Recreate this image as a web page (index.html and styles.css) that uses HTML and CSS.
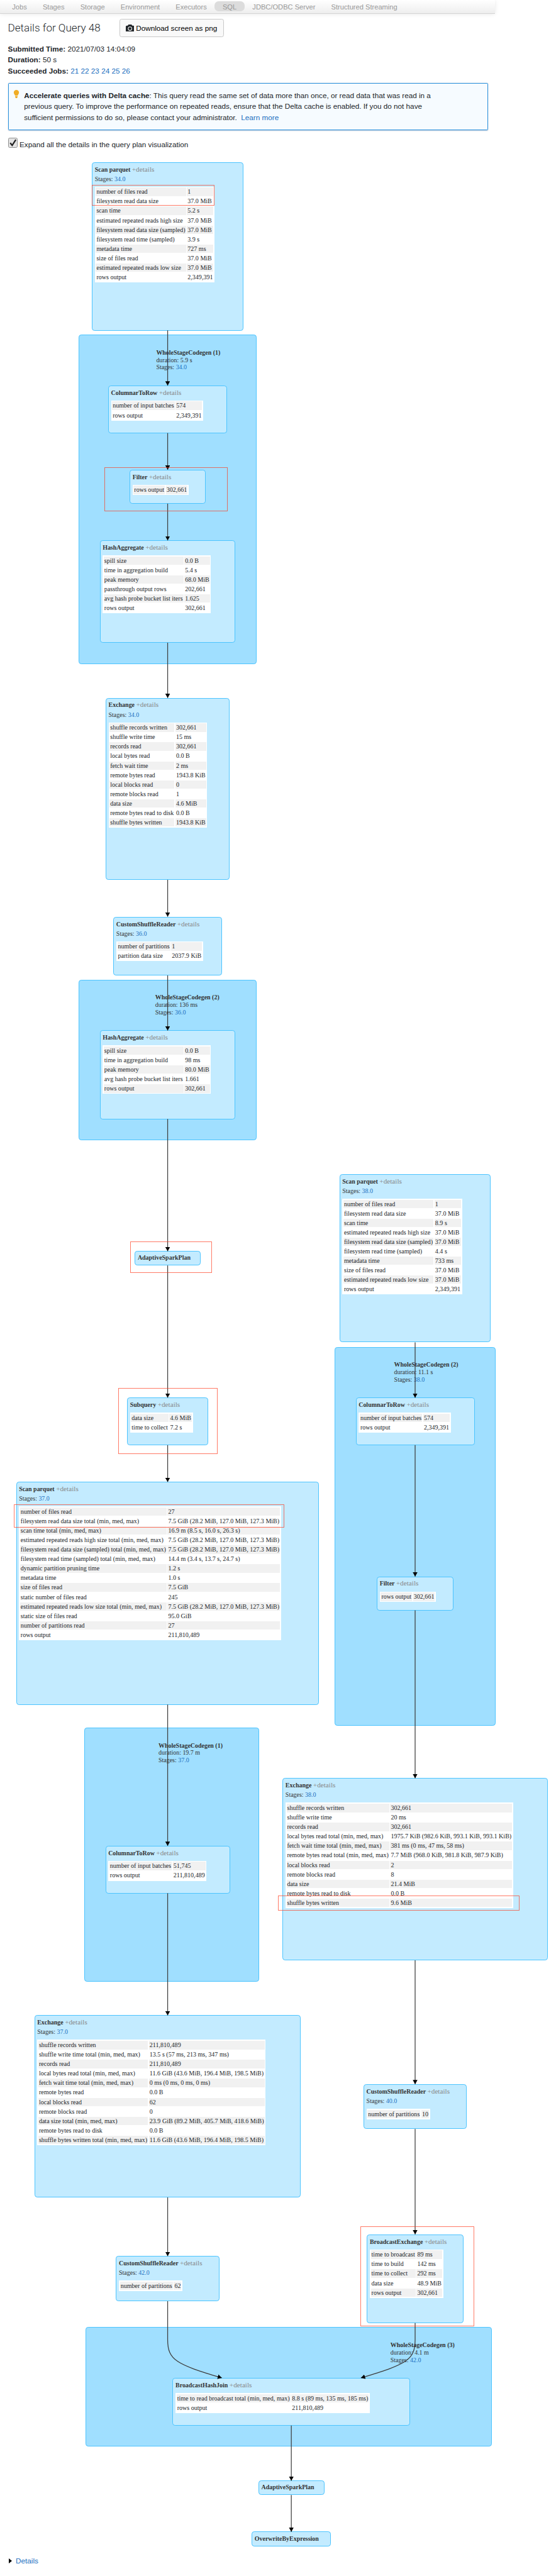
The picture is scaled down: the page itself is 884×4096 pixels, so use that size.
FILE: index.html
```html
<!DOCTYPE html>
<html lang="en">
<head>
<meta charset="utf-8">
<title>Details for Query 48</title>
<link rel="stylesheet" href="styles.css">
</head>
<body>
<div class="page">
  <nav class="tabs">
    <a>Jobs</a><a>Stages</a><a>Storage</a><a>Environment</a><a>Executors</a><a class="active">SQL</a><a>JDBC/ODBC Server</a><a>Structured Streaming</a>
  </nav>
  <header class="summary">
    <div class="heading">
      <h1>Details for Query 48</h1>
      <button class="download"><svg class="camera" viewBox="0 0 16 14"><path fill-rule="evenodd" d="M5 0h6l1.200 2H14a2 2 0 0 1 2 2v8a2 2 0 0 1-2 2H2a2 2 0 0 1-2-2V4a2 2 0 0 1 2-2h1.800zM8 3.800a4 4 0 1 0 0 8a4 4 0 0 0 0-8zm0 1.200a2.800 2.800 0 1 1 0 5.600a2.800 2.800 0 0 1 0-5.600z"/></svg>Download screen as png</button>
    </div>
    <ul class="facts">
      <li><b>Submitted Time:</b> 2021/07/03 14:04:09</li>
      <li><b>Duration:</b> 50 s</li>
      <li><b>Succeeded Jobs:</b> <a>21</a> <a>22</a> <a>23</a> <a>24</a> <a>25</a> <a>26</a></li>
    </ul>
    <div class="notice">
      <svg class="bulb" viewBox="0 0 11 16"><path d="M5.500 0a5 5 0 0 1 5 5c0 2.500-2 3.500-2.600 6H3.100C2.500 8.500.5 7.500.5 5a5 5 0 0 1 5-5zM3.200 12h4.600v1.500L6.500 16h-2l-1.300-2.500z"/></svg>
      <p><b>Accelerate queries with Delta cache</b>: This query read the same set of data more than once, or read data that was read in a<br>previous query. To improve the performance on repeated reads, ensure that the Delta cache is enabled. If you do not have<br>sufficient permissions to do so, please contact your administrator. &nbsp;<a>Learn more</a></p>
    </div>
    <label class="expand"><span class="check"><svg viewBox="0 0 12 12"><path d="M2 6.500l2.800 3.500L10 2"/></svg></span>Expand all the details in the query plan visualization</label>
  </header>

  <main class="plan">
    <div class="cluster" id="c1"></div>
    <div class="cluster" id="c2"></div>
    <div class="cluster" id="c3"></div>
    <div class="cluster" id="c4"></div>
    <div class="cluster" id="c5"></div>
    <div class="label" id="l1"><b>WholeStageCodegen (1)</b><br>duration: 5.9 s<br>Stages: <a>34.0</a></div>
    <div class="label" id="l2"><b>WholeStageCodegen (2)</b><br>duration: 136 ms<br>Stages: <a>36.0</a></div>
    <div class="label" id="l3"><b>WholeStageCodegen (2)</b><br>duration: 11.1 s<br>Stages: <a>38.0</a></div>
    <div class="label" id="l4"><b>WholeStageCodegen (1)</b><br>duration: 19.7 m<br>Stages: <a>37.0</a></div>
    <div class="label" id="l5"><b>WholeStageCodegen (3)</b><br>duration: 4.1 m<br>Stages: <a>42.0</a></div>

    <section class="node" id="scan1">
      <h2>Scan parquet <span>+details</span></h2><p>Stages: <a>34.0</a></p>
      <table>
        <tr><td>number of files read</td><td>1</td></tr>
        <tr><td>filesystem read data size</td><td>37.0 MiB</td></tr>
        <tr><td>scan time</td><td>5.2 s</td></tr>
        <tr><td>estimated repeated reads high size</td><td>37.0 MiB</td></tr>
        <tr><td>filesystem read data size (sampled)</td><td>37.0 MiB</td></tr>
        <tr><td>filesystem read time (sampled)</td><td>3.9 s</td></tr>
        <tr><td>metadata time</td><td>727 ms</td></tr>
        <tr><td>size of files read</td><td>37.0 MiB</td></tr>
        <tr><td>estimated repeated reads low size</td><td>37.0 MiB</td></tr>
        <tr><td>rows output</td><td>2,349,391</td></tr>
      </table>
    </section>
    <section class="node" id="col1">
      <h2>ColumnarToRow <span>+details</span></h2>
      <table>
        <tr><td>number of input batches</td><td>574</td></tr>
        <tr><td>rows output</td><td>2,349,391</td></tr>
      </table>
    </section>
    <section class="node" id="filter1">
      <h2>Filter <span>+details</span></h2>
      <table>
        <tr><td>rows output</td><td>302,661</td></tr>
      </table>
    </section>
    <section class="node" id="hash1">
      <h2>HashAggregate <span>+details</span></h2>
      <table>
        <tr><td>spill size</td><td>0.0 B</td></tr>
        <tr><td>time in aggregation build</td><td>5.4 s</td></tr>
        <tr><td>peak memory</td><td>68.0 MiB</td></tr>
        <tr><td>passthrough output rows</td><td>202,661</td></tr>
        <tr><td>avg hash probe bucket list iters</td><td>1.625</td></tr>
        <tr><td>rows output</td><td>302,661</td></tr>
      </table>
    </section>
    <section class="node" id="ex1">
      <h2>Exchange <span>+details</span></h2><p>Stages: <a>34.0</a></p>
      <table>
        <tr><td>shuffle records written</td><td>302,661</td></tr>
        <tr><td>shuffle write time</td><td>15 ms</td></tr>
        <tr><td>records read</td><td>302,661</td></tr>
        <tr><td>local bytes read</td><td>0.0 B</td></tr>
        <tr><td>fetch wait time</td><td>2 ms</td></tr>
        <tr><td>remote bytes read</td><td>1943.8 KiB</td></tr>
        <tr><td>local blocks read</td><td>0</td></tr>
        <tr><td>remote blocks read</td><td>1</td></tr>
        <tr><td>data size</td><td>4.6 MiB</td></tr>
        <tr><td>remote bytes read to disk</td><td>0.0 B</td></tr>
        <tr><td>shuffle bytes written</td><td>1943.8 KiB</td></tr>
      </table>
    </section>
    <section class="node" id="reader1">
      <h2>CustomShuffleReader <span>+details</span></h2><p>Stages: <a>36.0</a></p>
      <table>
        <tr><td>number of partitions</td><td>1</td></tr>
        <tr><td>partition data size</td><td>2037.9 KiB</td></tr>
      </table>
    </section>
    <section class="node" id="hash2">
      <h2>HashAggregate <span>+details</span></h2>
      <table>
        <tr><td>spill size</td><td>0.0 B</td></tr>
        <tr><td>time in aggregation build</td><td>98 ms</td></tr>
        <tr><td>peak memory</td><td>80.0 MiB</td></tr>
        <tr><td>avg hash probe bucket list iters</td><td>1.661</td></tr>
        <tr><td>rows output</td><td>302,661</td></tr>
      </table>
    </section>
    <section class="node small" id="adaptive1"><h2>AdaptiveSparkPlan</h2></section>
    <section class="node" id="subquery">
      <h2>Subquery <span>+details</span></h2>
      <table>
        <tr><td>data size</td><td>4.6 MiB</td></tr>
        <tr><td>time to collect</td><td>7.2 s</td></tr>
      </table>
    </section>
    <section class="node" id="scan2">
      <h2>Scan parquet <span>+details</span></h2><p>Stages: <a>38.0</a></p>
      <table>
        <tr><td>number of files read</td><td>1</td></tr>
        <tr><td>filesystem read data size</td><td>37.0 MiB</td></tr>
        <tr><td>scan time</td><td>8.9 s</td></tr>
        <tr><td>estimated repeated reads high size</td><td>37.0 MiB</td></tr>
        <tr><td>filesystem read data size (sampled)</td><td>37.0 MiB</td></tr>
        <tr><td>filesystem read time (sampled)</td><td>4.4 s</td></tr>
        <tr><td>metadata time</td><td>733 ms</td></tr>
        <tr><td>size of files read</td><td>37.0 MiB</td></tr>
        <tr><td>estimated repeated reads low size</td><td>37.0 MiB</td></tr>
        <tr><td>rows output</td><td>2,349,391</td></tr>
      </table>
    </section>
    <section class="node" id="col2">
      <h2>ColumnarToRow <span>+details</span></h2>
      <table>
        <tr><td>number of input batches</td><td>574</td></tr>
        <tr><td>rows output</td><td>2,349,391</td></tr>
      </table>
    </section>
    <section class="node" id="filter2">
      <h2>Filter <span>+details</span></h2>
      <table>
        <tr><td>rows output</td><td>302,661</td></tr>
      </table>
    </section>
    <section class="node" id="scan3">
      <h2>Scan parquet <span>+details</span></h2><p>Stages: <a>37.0</a></p>
      <table>
        <tr><td>number of files read</td><td>27</td></tr>
        <tr><td>filesystem read data size total (min, med, max)</td><td>7.5 GiB (28.2 MiB, 127.0 MiB, 127.3 MiB)</td></tr>
        <tr><td>scan time total (min, med, max)</td><td>16.9 m (8.5 s, 16.0 s, 26.3 s)</td></tr>
        <tr><td>estimated repeated reads high size total (min, med, max)</td><td>7.5 GiB (28.2 MiB, 127.0 MiB, 127.3 MiB)</td></tr>
        <tr><td>filesystem read data size (sampled) total (min, med, max)</td><td>7.5 GiB (28.2 MiB, 127.0 MiB, 127.3 MiB)</td></tr>
        <tr><td>filesystem read time (sampled) total (min, med, max)</td><td>14.4 m (3.4 s, 13.7 s, 24.7 s)</td></tr>
        <tr><td>dynamic partition pruning time</td><td>1.2 s</td></tr>
        <tr><td>metadata time</td><td>1.0 s</td></tr>
        <tr><td>size of files read</td><td>7.5 GiB</td></tr>
        <tr><td>static number of files read</td><td>245</td></tr>
        <tr><td>estimated repeated reads low size total (min, med, max)</td><td>7.5 GiB (28.2 MiB, 127.0 MiB, 127.3 MiB)</td></tr>
        <tr><td>static size of files read</td><td>95.0 GiB</td></tr>
        <tr><td>number of partitions read</td><td>27</td></tr>
        <tr><td>rows output</td><td>211,810,489</td></tr>
      </table>
    </section>
    <section class="node" id="col3">
      <h2>ColumnarToRow <span>+details</span></h2>
      <table>
        <tr><td>number of input batches</td><td>51,745</td></tr>
        <tr><td>rows output</td><td>211,810,489</td></tr>
      </table>
    </section>
    <section class="node" id="ex2">
      <h2>Exchange <span>+details</span></h2><p>Stages: <a>38.0</a></p>
      <table>
        <tr><td>shuffle records written</td><td>302,661</td></tr>
        <tr><td>shuffle write time</td><td>20 ms</td></tr>
        <tr><td>records read</td><td>302,661</td></tr>
        <tr><td>local bytes read total (min, med, max)</td><td>1975.7 KiB (982.6 KiB, 993.1 KiB, 993.1 KiB)</td></tr>
        <tr><td>fetch wait time total (min, med, max)</td><td>381 ms (0 ms, 47 ms, 58 ms)</td></tr>
        <tr><td>remote bytes read total (min, med, max)</td><td>7.7 MiB (968.0 KiB, 981.8 KiB, 987.9 KiB)</td></tr>
        <tr><td>local blocks read</td><td>2</td></tr>
        <tr><td>remote blocks read</td><td>8</td></tr>
        <tr><td>data size</td><td>21.4 MiB</td></tr>
        <tr><td>remote bytes read to disk</td><td>0.0 B</td></tr>
        <tr><td>shuffle bytes written</td><td>9.6 MiB</td></tr>
      </table>
    </section>
    <section class="node" id="ex3">
      <h2>Exchange <span>+details</span></h2><p>Stages: <a>37.0</a></p>
      <table>
        <tr><td>shuffle records written</td><td>211,810,489</td></tr>
        <tr><td>shuffle write time total (min, med, max)</td><td>13.5 s (57 ms, 213 ms, 347 ms)</td></tr>
        <tr><td>records read</td><td>211,810,489</td></tr>
        <tr><td>local bytes read total (min, med, max)</td><td>11.6 GiB (43.6 MiB, 196.4 MiB, 198.5 MiB)</td></tr>
        <tr><td>fetch wait time total (min, med, max)</td><td>0 ms (0 ms, 0 ms, 0 ms)</td></tr>
        <tr><td>remote bytes read</td><td>0.0 B</td></tr>
        <tr><td>local blocks read</td><td>62</td></tr>
        <tr><td>remote blocks read</td><td>0</td></tr>
        <tr><td>data size total (min, med, max)</td><td>23.9 GiB (89.2 MiB, 405.7 MiB, 418.6 MiB)</td></tr>
        <tr><td>remote bytes read to disk</td><td>0.0 B</td></tr>
        <tr><td>shuffle bytes written total (min, med, max)</td><td>11.6 GiB (43.6 MiB, 196.4 MiB, 198.5 MiB)</td></tr>
      </table>
    </section>
    <section class="node" id="reader2">
      <h2>CustomShuffleReader <span>+details</span></h2><p>Stages: <a>40.0</a></p>
      <table>
        <tr><td>number of partitions</td><td>10</td></tr>
      </table>
    </section>
    <section class="node" id="reader3">
      <h2>CustomShuffleReader <span>+details</span></h2><p>Stages: <a>42.0</a></p>
      <table>
        <tr><td>number of partitions</td><td>62</td></tr>
      </table>
    </section>
    <section class="node" id="broadcast">
      <h2>BroadcastExchange <span>+details</span></h2>
      <table>
        <tr><td>time to broadcast</td><td>89 ms</td></tr>
        <tr><td>time to build</td><td>142 ms</td></tr>
        <tr><td>time to collect</td><td>292 ms</td></tr>
        <tr><td>data size</td><td>48.9 MiB</td></tr>
        <tr><td>rows output</td><td>302,661</td></tr>
      </table>
    </section>
    <section class="node" id="join">
      <h2>BroadcastHashJoin <span>+details</span></h2>
      <table>
        <tr><td>time to read broadcast total (min, med, max)</td><td>8.8 s (89 ms, 135 ms, 185 ms)</td></tr>
        <tr><td>rows output</td><td>211,810,489</td></tr>
      </table>
    </section>
    <section class="node small" id="adaptive2"><h2>AdaptiveSparkPlan</h2></section>
    <section class="node small" id="overwrite"><h2>OverwriteByExpression</h2></section>

    <svg class="edges" viewBox="0 0 1055 4891" width="1055" height="4891">
      <defs>
        <marker id="arrow" viewBox="0 0 8 9" refX="8" refY="4.500" markerWidth="8" markerHeight="9" markerUnits="userSpaceOnUse" orient="auto"><path class="head" d="M0 0L8 4.500L0 9z"/></marker>
      </defs>
      <path class="edge" d="M318.200 627V731.700"/>
      <path class="edge" d="M318.200 822V891.500"/>
      <path class="edge" d="M318.200 956V1025.700"/>
      <path class="edge" d="M318.200 1220V1324.800"/>
      <path class="edge" d="M318.200 1670V1740"/>
      <path class="edge" d="M318.200 1851.400V1956"/>
      <path class="edge" d="M318.200 2124V2375"/>
      <path class="edge" d="M318.200 2402V2653"/>
      <path class="edge" d="M318.200 2743V2813"/>
      <path class="edge" d="M318.200 3235.500V3503.600"/>
      <path class="edge" d="M318.200 3593.600V3825.400"/>
      <path class="edge" d="M318.200 4171V4282.500"/>
      <path class="edge" d="M787.900 2548V2653"/>
      <path class="edge" d="M787.900 2743V2992.500"/>
      <path class="edge" d="M787.900 3056.600V3375.400"/>
      <path class="edge" d="M787.900 3721V3956"/>
      <path class="edge" d="M787.900 4041V4241"/>
      <path class="edge" d="M318.200 4367.800V4441C318.200 4480 335 4488 421 4513.500"/>
      <path class="edge" d="M787.900 4409.400V4441C787.900 4480 771 4488 685 4513.500"/>
      <path class="edge" d="M552.900 4604V4708.800"/>
      <path class="edge" d="M552.900 4736V4805.600"/>
    </svg>

    <div class="mark" id="m1"></div>
    <div class="mark" id="m2"></div>
    <div class="mark" id="m3"></div>
    <div class="mark" id="m4"></div>
    <div class="mark" id="m5"></div>
    <div class="mark" id="m6"></div>
    <div class="mark" id="m7"></div>
  </main>

  <footer class="more"><i></i><a>Details</a></footer>
</div>
</body>
</html>
```
FILE: styles.css
```css
* { box-sizing: border-box; }
body {
  margin: 0;
  background: #fff;
  color: #212529;
  font: 14px/21px "Liberation Sans", Arial, sans-serif;
  overflow: hidden;
}
.page {
  zoom: 0.8377;
  position: relative;
  width: 1055px;
  height: 4889px;
  display: flex;
  flex-direction: column;
}
a { color: #1b6fc0; }

/* Tab bar */
.tabs {
  display: flex;
  align-items: flex-start;
  width: 940px;
  height: 26px;
  padding: 2px 0 0 8px;
  background: linear-gradient(#fff, #eee);
  border-bottom: 1px solid #d4d4d4;
  box-shadow: 0 1px 8px rgba(0, 0, 0, .1);
  font-size: 13.3px;
  line-height: 23px;
}
.tabs a { padding: 0 15px; height: 20px; color: #999; white-space: nowrap; }
.tabs .active { background: #dcdcdc; border-radius: 8px; }

/* Summary */
.summary { width: 940px; height: 274px; padding: 10px 14px 0 15px; }
.heading { display: flex; align-items: center; gap: 30px; height: 34px; }
.heading h1 { margin: 0; width: 182px; font: 300 20.4px/34px Roboto, sans-serif; white-space: nowrap; }
.download {
  display: flex;
  align-items: center;
  gap: 4px;
  width: 198px;
  height: 34px;
  padding: 0 0 0 10px;
  background: #f9f9f9;
  border: 1px solid #c8c8c8;
  border-radius: 4px;
  color: #000;
  font: 14px "Liberation Sans", Arial, sans-serif;
  white-space: nowrap;
}
.camera { width: 16px; height: 14px; fill: #212529; }
.facts { margin: 12px 0 13px; padding: 0; list-style: none; }
.notice {
  display: flex;
  gap: 9px;
  height: 89px;
  padding: 11px 0 0 8.500px;
  background: #f6fbff;
  border: 2px solid #2a90dc;
  border-radius: 2px;
  box-shadow: 0 1px 2px rgba(0, 60, 120, .3);
}
.bulb { width: 12px; height: 16px; fill: #f0ad27; }
.notice p { margin: 0; white-space: nowrap; }
.expand { display: flex; gap: 4px; margin-top: 15px; line-height: 27px; }
.check {
  width: 18px;
  height: 18px;
  background: #e3e3e3;
  border: 1px solid #909090;
  border-radius: 3px;
}
.check svg { display: block; width: 16px; height: 16px; fill: none; stroke: #222; stroke-width: 2; }

/* Query plan canvas; coordinates are relative to .page */
.plan { height: 4550px; font: 11.9px/14px "Liberation Serif", "Times New Roman", serif; color: #333; }
.cluster, .node, .mark, .label, .edges { position: absolute; }
.cluster { background: #a0dfff; border: 1.3px solid #4cc4ff; border-radius: 5px; }
.node { padding: 3.500px 0 0 4.300px; background: #c3ebff; border: 1.3px solid #4cc4ff; border-radius: 5px; white-space: nowrap; }
.node.small { padding-top: 2.500px; }
.node h2 { margin: 0; font-size: 11.9px; line-height: 18px; height: 18px; font-weight: bold; }
.node h2 span { font-size: 13.4px; font-weight: normal; color: #888; }
.node p { margin: 0; line-height: 18px; height: 18px; }
.node table {
  display: grid;
  grid-template-columns: auto auto;
  gap: 2px;
  width: max-content;
  margin-top: 6px;
  padding: 2px;
  background: #fff;
  font-size: 12px;
  color: #212529;
}
.node tbody, .node tr { display: contents; }
.node td { display: block; height: 16px; padding: 0 1.200px; line-height: 16px; }
.node tr:nth-child(odd) td { background: #f1f1f1; }
.edges { left: 0; top: 0; }
.edge { fill: none; stroke: #3d3d3d; stroke-width: 1.500; marker-end: url(#arrow); }
.head { fill: #000; stroke: none; }
.mark { border: 1.500px solid rgba(255, 50, 20, .65); }

#c1 { left: 149px; top: 635.500px; width: 338px; height: 625px; }
#c2 { left: 149px; top: 1859.500px; width: 338px; height: 304.500px; }
#c3 { left: 635px; top: 2556.500px; width: 306px; height: 719.500px; }
#c4 { left: 159.500px; top: 3279.500px; width: 332.500px; height: 482px; }
#c5 { left: 162.500px; top: 4417px; width: 771px; height: 227px; }

#l1 { left: 296.500px; top: 662.500px; }
#l2 { left: 294.500px; top: 1886.300px; }
#l3 { left: 748px; top: 2583.500px; }
#l4 { left: 300.800px; top: 3306.300px; }
#l5 { left: 741px; top: 4444.400px; }

#scan1 { left: 174.500px; top: 307.500px; width: 287px; height: 320px; }
#col1 { left: 205.300px; top: 731.500px; width: 225.700px; height: 91px; }
#filter1 { left: 246px; top: 891.300px; width: 144.700px; height: 65px; }
#hash1 { left: 189.300px; top: 1025.500px; width: 257.700px; height: 195px; }
#ex1 { left: 200.500px; top: 1324.500px; width: 235.300px; height: 345.700px; }
#reader1 { left: 215.200px; top: 1740px; width: 206px; height: 111.500px; }
#hash2 { left: 189.300px; top: 1955.700px; width: 257.700px; height: 168.700px; }
#adaptive1 { left: 255.800px; top: 2374.700px; width: 125px; height: 27.500px; }
#subquery { left: 241.200px; top: 2652.700px; width: 154px; height: 90.500px; }
#scan2 { left: 644.300px; top: 2228.500px; width: 287.400px; height: 319.500px; }
#col2 { left: 675.200px; top: 2652.800px; width: 225.800px; height: 90.500px; }
#filter2 { left: 715.200px; top: 2992.200px; width: 145.200px; height: 64.500px; }
#scan3 { left: 30.500px; top: 2812.700px; width: 575.300px; height: 423px; }
#col3 { left: 200px; top: 3503.300px; width: 236.800px; height: 90.500px; }
#ex2 { left: 536.300px; top: 3375.200px; width: 503.500px; height: 346px; }
#ex3 { left: 65.200px; top: 3825.200px; width: 506px; height: 346px; }
#reader2 { left: 690px; top: 3955.800px; width: 196.200px; height: 85.500px; }
#reader3 { left: 220.200px; top: 4282.300px; width: 196px; height: 85.500px; }
#broadcast { left: 696.300px; top: 4241px; width: 183.300px; height: 168.500px; }
#join { left: 327.600px; top: 4513.500px; width: 451px; height: 91px; }
#adaptive2 { left: 490.500px; top: 4708.600px; width: 125.200px; height: 27.500px; }
#overwrite { left: 477.700px; top: 4805.400px; width: 150.800px; height: 27.500px; }

#m1 { left: 174.300px; top: 351.300px; width: 232.700px; height: 39.200px; }
#m2 { left: 198.300px; top: 887.300px; width: 233.300px; height: 83.400px; }
#m3 { left: 247.300px; top: 2356px; width: 155.400px; height: 60.300px; }
#m4 { left: 224.700px; top: 2634.800px; width: 188px; height: 125.400px; }
#m5 { left: 26.800px; top: 2855.300px; width: 513px; height: 44px; }
#m6 { left: 528.200px; top: 3598px; width: 457.600px; height: 28.200px; }
#m7 { left: 683.700px; top: 4226px; width: 216.200px; height: 190px; }

.more { display: flex; align-items: center; gap: 7px; padding-left: 17px; height: 22px; }
.more i { border: solid transparent; border-width: 5px 0 5px 6px; border-left-color: #000; }
```
